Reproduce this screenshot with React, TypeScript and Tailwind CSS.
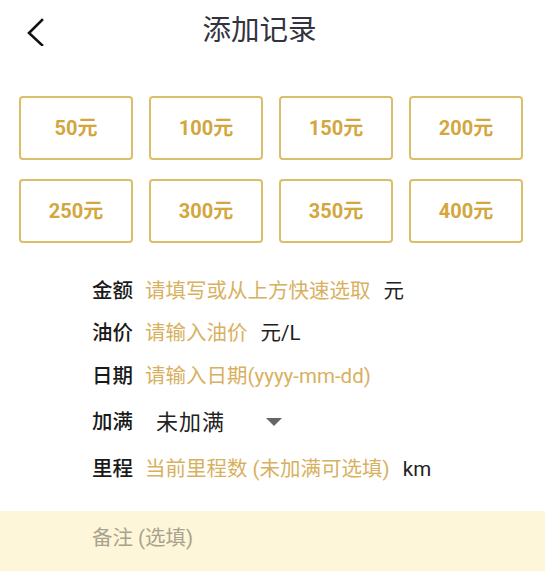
import React from "react";

const amounts = ["50元", "100元", "150元", "200元", "250元", "300元", "350元", "400元"];

function Row({ h, label, children }: { h: string; label: string; children: React.ReactNode }) {
  return (
    <div className={`flex items-center ${h} pl-[92px]`}>
      <span className="text-[20.5px] font-medium text-[#1a1a1a] w-[53px] shrink-0">{label}</span>
      {children}
    </div>
  );
}

export default function App() {
  return (
    <div
      className="w-[545px] h-[571px] bg-white overflow-hidden relative"
      style={{ fontFamily: "Roboto, 'Noto Sans CJK SC', sans-serif" }}
    >
      <div className="flex items-center h-[62px] relative">
        <svg className="absolute left-[24px] top-[16px]" width="22" height="30" viewBox="0 0 22 30">
          <path d="M18 4 L5 17 L18 29" fill="none" stroke="#111" strokeWidth="2.6" strokeLinecap="square" />
        </svg>
        <div className="w-full text-center text-[28.5px] text-[#33333d] leading-none pr-[26px] pt-[1px]">添加记录</div>
      </div>

      <div className="grid grid-cols-4 gap-x-[16px] gap-y-[19px] pl-[19px] pr-[22px] pt-[34px]">
        {amounts.map((a) => (
          <div
            key={a}
            className="h-[64px] border-2 border-[#dcbd6a] rounded-[4px] flex items-center justify-center text-[20px] font-bold text-[#d3a63e]"
          >
            {a}
          </div>
        ))}
      </div>

      <div className="pt-[27px]">
        <Row h="h-[42px]" label="金额">
          <span className="text-[20.5px] text-[#d8b15f]">请填写或从上方快速选取</span>
          <span className="text-[20.5px] text-[#222] ml-[13px]">元</span>
        </Row>
        <Row h="h-[42px]" label="油价">
          <span className="text-[20.5px] text-[#d8b15f]">请输入油价</span>
          <span className="text-[20.5px] text-[#222] ml-[13px]">元/L</span>
        </Row>
        <Row h="h-[45px]" label="日期">
          <span className="text-[20.5px] text-[#d8b15f]">请输入日期(yyyy-mm-dd)</span>
        </Row>
        <Row h="h-[47px]" label="加满">
          <span className="text-[22px] tracking-[1px] text-[#222] ml-[11px]">未加满</span>
          <svg className="ml-[41px]" width="16" height="9" viewBox="0 0 16 9">
            <path d="M0 0 L16 0 L8 8 Z" fill="#666" />
          </svg>
        </Row>
        <Row h="h-[46px]" label="里程">
          <span className="text-[20.5px] text-[#d8b15f]">当前里程数 (未加满可选填)</span>
          <span className="text-[20.5px] text-[#222] ml-[13px]">km</span>
        </Row>
      </div>

      <div className="mt-[19px] h-[61px] bg-[#fdf6d9] flex items-center pl-[92px] pb-[6px]">
        <span className="text-[20.5px] text-[#a9a28c]">备注 (选填)</span>
      </div>
    </div>
  );
}
